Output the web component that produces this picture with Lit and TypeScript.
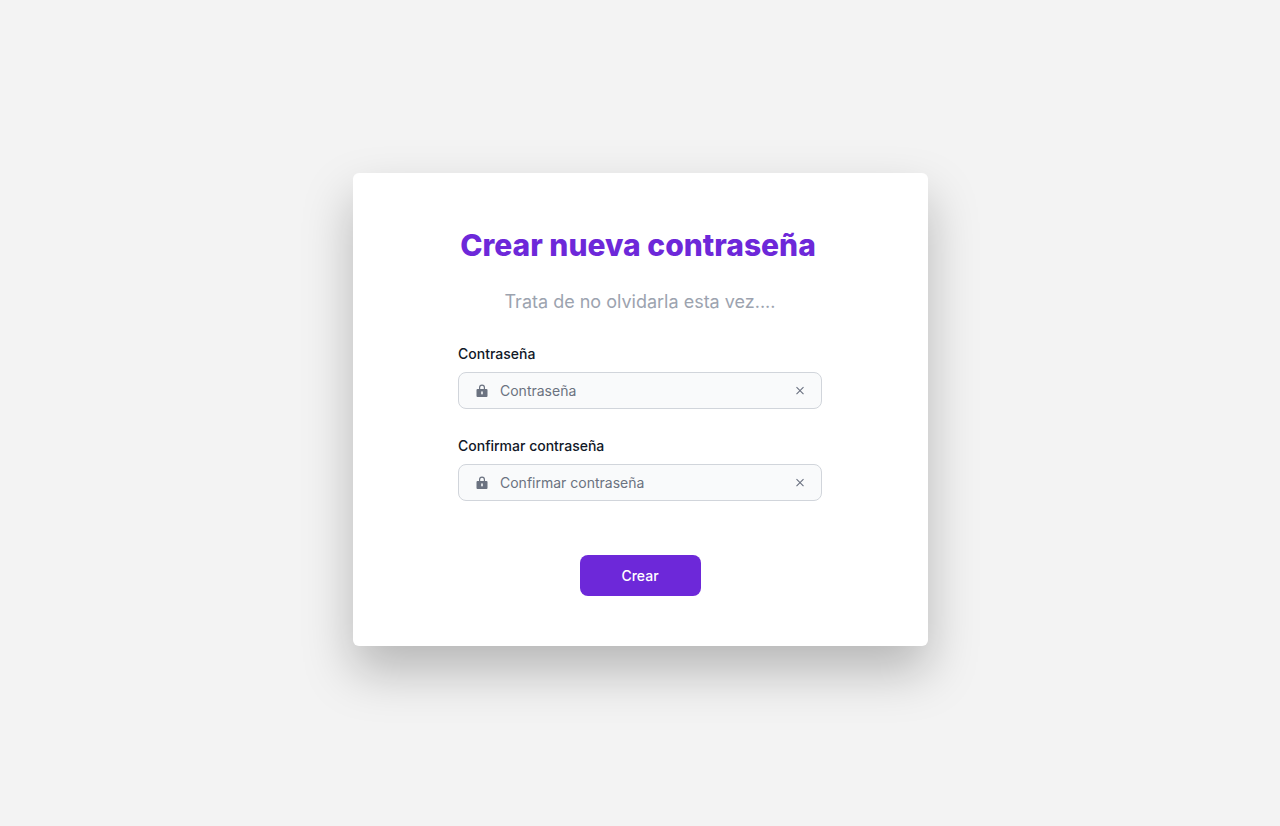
import { LitElement, html, css } from "lit";
import { customElement, property, query } from "lit/decorators.js";

@customElement("password-field")
export class PasswordField extends LitElement {
  @property() label = "";
  @property() name = "";
  @query("input") private input!: HTMLInputElement;

  static styles = css`
    :host {
      display: block;
      font-size: 14px;
      line-height: 20px;
    }
    .label {
      display: block;
      margin-bottom: 8px;
      font-weight: 500;
      color: #111827;
    }
    .box {
      display: flex;
      align-items: center;
      gap: 11px;
      box-sizing: border-box;
      height: 37px;
      padding: 0 16px;
      border: 1px solid #d1d5db;
      border-radius: 8px;
      background: #f9fafb;
      color: #6b7280;
    }
    .icon {
      display: block;
      flex: none;
    }
    .input {
      flex: 1;
      min-width: 0;
      padding: 0;
      border: 0;
      outline: 0;
      background: transparent;
      color: #111827;
      font: inherit;
    }
    .input::placeholder {
      color: #6b7280;
      opacity: 1;
    }
    .box:focus-within {
      border-color: #6d28d9;
    }
    .clear {
      flex: none;
      padding: 0;
      border: 0;
      background: transparent;
      color: inherit;
      cursor: pointer;
    }
  `;

  private clear() {
    this.input.value = "";
    this.input.focus();
  }

  render() {
    return html`
      <label class="label" for="field">${this.label}</label>
      <div class="box">
        <svg class="icon" width="14" height="14" viewBox="0 0 14 14" aria-hidden="true">
          <path
            fill="currentColor"
            fill-rule="evenodd"
            d="M7 .5a3 3 0 0 0-3 3V5H2.500a1 1 0 0 0-1 1v6a1 1 0 0 0 1 1h9a1 1 0 0 0 1-1V6a1 1 0 0 0-1-1H10V3.500a3 3 0 0 0-3-3Zm0 1.200a1.800 1.800 0 0 1 1.800 1.800V5H5.200V3.500A1.800 1.800 0 0 1 7 1.700ZM7 7.300a.8.8 0 0 1 .8.800v1.600a.8.8 0 0 1-1.600 0V8.100A.8.800 0 0 1 7 7.300Z"
          />
        </svg>
        <input class="input" id="field" type="password" name=${this.name} placeholder=${this.label} />
        <button class="clear" type="button" aria-label="Borrar" @click=${this.clear}>
          <svg class="icon" width="10" height="10" viewBox="0 0 10 10" aria-hidden="true">
            <path d="M1.500 1.200l7 7M8.500 1.200l-7 7" fill="none" stroke="currentColor" stroke-width="1.100" />
          </svg>
        </button>
      </div>
    `;
  }
}

@customElement("app-root")
export class AppRoot extends LitElement {
  static styles = css`
    :host {
      display: flex;
      align-items: center;
      justify-content: center;
      box-sizing: border-box;
      min-height: 100vh;
      padding: 16px 16px 23px;
      background: #f3f3f3;
      font-family: Inter, sans-serif;
    }
    .card {
      display: flex;
      flex-direction: column;
      align-items: center;
      box-sizing: border-box;
      width: 100%;
      max-width: 575px;
      padding: 54px 32px 50px;
      border-radius: 6px;
      background: #fff;
      box-shadow: 0 25px 50px rgba(0, 0, 0, 0.25);
    }
    .title {
      margin: 0 4px 0 0;
      font-size: 30px;
      line-height: 36px;
      font-weight: 800;
      color: #6d28d9;
    }
    .subtitle {
      margin: 25px 0 28px;
      font-size: 18px;
      line-height: 28px;
      color: #9ca3af;
    }
    .form {
      display: flex;
      flex-direction: column;
      gap: 27px;
      width: 100%;
      max-width: 364px;
    }
    .submit {
      align-self: center;
      box-sizing: border-box;
      min-width: 121px;
      margin-top: 27px;
      padding: 0 32px;
      height: 41px;
      border: 0;
      border-radius: 8px;
      background: #6d28d9;
      color: #fff;
      font: 500 14px/20px Inter, sans-serif;
      cursor: pointer;
    }
  `;

  private submit(event: Event) {
    event.preventDefault();
  }

  render() {
    return html`
      <main class="card">
        <h1 class="title">Crear nueva contraseña</h1>
        <p class="subtitle">Trata de no olvidarla esta vez....</p>
        <form class="form" @submit=${this.submit}>
          <password-field label="Contraseña" name="password"></password-field>
          <password-field label="Confirmar contraseña" name="confirm"></password-field>
          <button class="submit" type="submit">Crear</button>
        </form>
      </main>
    `;
  }
}
